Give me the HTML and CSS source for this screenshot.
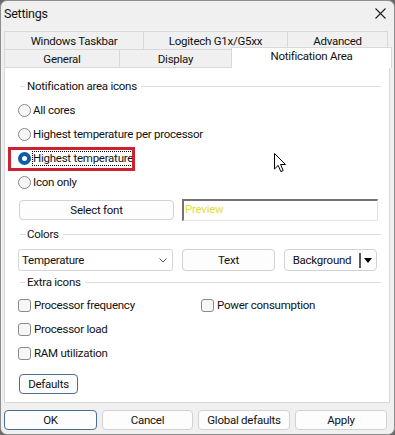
FILE: index.html
```html
<!DOCTYPE html>
<html lang="en">
  <head>
    <meta charset="utf-8" />
    <link rel="stylesheet" href="styles.css">
    <title>Settings</title>
  </head>
  <body>
    <div class="window">
      <div class="titlebar">
        <span class="title">Settings</span>
        <svg class="close" width="11" height="11" viewBox="0 0 11 11">
          <path d="M0.5 0.5 L10.5 10.5 M10.5 0.5 L0.5 10.5" stroke="#1f1f1f" stroke-width="1.1" fill="none" />
        </svg>
      </div>

      <div class="tabs">
        <div class="tabrow top">
          <div class="tab">Windows Taskbar</div>
          <div class="tab">Logitech G1x/G5xx</div>
          <div class="tab">Advanced</div>
        </div>
        <div class="tabrow bottom">
          <div class="tab">General</div>
          <div class="tab">Display</div>
          <div class="tab selected">Notification Area</div>
        </div>
      </div>

      <div class="page">
        <div class="group-title"><span>Notification area icons</span></div>
        <div class="option first"><span class="radio"></span>All cores</div>
        <div class="option"><span class="radio"></span>Highest temperature per processor</div>
        <div class="option marked">
          <span class="radio checked"></span><span class="focus">Highest temperature</span>
          <div class="highlight"></div>
        </div>
        <div class="option"><span class="radio"></span>Icon only</div>

        <div class="font-row">
          <button class="btn font-btn">Select font</button>
          <div class="preview">Preview</div>
        </div>

        <div class="group-title colors"><span>Colors</span></div>
        <div class="color-row">
          <div class="combo">
            <span>Temperature</span>
            <svg width="8" height="5" viewBox="0 0 8 5">
              <path d="M0.5 0.5 L4 4 L7.5 0.5" stroke="#555" fill="none" />
            </svg>
          </div>
          <button class="btn text-btn">Text</button>
          <button class="btn split-btn">
            <span class="split-label">Background</span>
            <span class="split-bar"></span>
            <span class="split-arrow"></span>
          </button>
        </div>

        <div class="group-title extra"><span>Extra icons</span></div>
        <div class="checks">
          <div class="option"><span class="check"></span>Processor frequency</div>
          <div class="option"><span class="check"></span>Power consumption</div>
          <div class="option"><span class="check"></span>Processor load</div>
          <div class="option"></div>
          <div class="option"><span class="check"></span>RAM utilization</div>
        </div>

        <button class="btn default defaults-btn">Defaults</button>

        <svg class="cursor" width="13" height="20" viewBox="0 0 13 20">
          <path d="M0.5 0.5 L0.5 16 L4.2 12.4 L6.8 18.6 L9.2 17.6 L6.6 11.5 L11.5 11.5 Z" fill="#fff" stroke="#000" stroke-width="1" stroke-linejoin="round" />
        </svg>
      </div>

      <div class="buttons">
        <button class="btn default ok">OK</button>
        <button class="btn cancel">Cancel</button>
        <button class="btn global">Global defaults</button>
        <button class="btn apply">Apply</button>
      </div>
    </div>
  </body>
</html>
```

FILE: styles.css
```css
* {
  box-sizing: border-box;
}

body {
  margin: 0;
  background: #6a6a6a;
  font-family: Roboto, "Noto Sans", sans-serif;
  font-size: 11.5px;
  letter-spacing: -0.25px;
  color: #111;
}

.window {
  width: 395px;
  height: 435px;
  background: #f0f0f0;
  border: 1px solid #8f8f8f;
  border-radius: 7px;
  overflow: hidden;
  display: flex;
  flex-direction: column;
}

.titlebar {
  height: 29px;
  display: flex;
  align-items: center;
  justify-content: space-between;
  padding: 0 8px 4px 3px;
  font-size: 12.5px;
}

/* tabs */

.tabs {
  margin-top: 1px;
}

.tabrow {
  display: flex;
  margin-left: 3px;
  height: 18px;
}

.tab {
  height: 18px;
  border: 1px solid #d9d9d9;
  border-bottom: 0;
  margin-left: -1px;
  background: #f0f0f0;
  display: flex;
  align-items: center;
  justify-content: center;
  white-space: nowrap;
}

.tab:first-child {
  margin-left: 0;
}

.top .tab:nth-child(1) { width: 140px; }
.top .tab:nth-child(2) { width: 145px; }
.top .tab:nth-child(3) { width: 101px; }
.bottom .tab:nth-child(1) { width: 116px; }
.bottom .tab:nth-child(2) { width: 113px; }

.tab.selected {
  width: 161px;
  height: 21px;
  margin-top: -2px;
  background: #fff;
  padding-bottom: 4px;
  position: relative;
  z-index: 2;
}

/* page */

.page {
  position: relative;
  margin-left: 3px;
  width: 386px;
  height: 336px;
  background: #fff;
  border: 1px solid #d9d9d9;
  padding: 0 8px 0 13px;
}

.group-title {
  display: flex;
  align-items: center;
  height: 16px;
  margin: 10px 0 0 2px;
}

.group-title::before {
  content: "";
  width: 5px;
  height: 1px;
  background: #dcdcdc;
  margin-right: 2px;
}

.group-title::after {
  content: "";
  flex: 1;
  height: 1px;
  background: #dcdcdc;
  margin-left: 4px;
}

.group-title.colors {
  margin-top: 5px;
}

.group-title.extra {
  margin-top: 3px;
}

.option {
  height: 24px;
  display: flex;
  align-items: center;
  white-space: nowrap;
}

.option.first {
  margin-top: 4px;
}

.option.marked {
  position: relative;
}

.radio {
  width: 13px;
  height: 13px;
  border: 1px solid #8a8a8a;
  border-radius: 50%;
  background: #f6f6f6;
  margin-right: 2px;
  flex: none;
}

.radio.checked {
  border: 4px solid #0a5ea8;
  background: #fff;
}

.focus {
  outline: 1px dotted #000;
  padding: 0 1px 0 0;
  line-height: 13px;
}

.highlight {
  position: absolute;
  left: -10px;
  top: 1px;
  width: 127px;
  height: 24px;
  border: 3px solid #cf2230;
}

.check {
  width: 13px;
  height: 13px;
  border: 1px solid #8a8a8a;
  border-radius: 3px;
  background: #f6f6f6;
  margin-right: 3px;
  flex: none;
}

/* buttons */

.btn {
  font: inherit;
  letter-spacing: inherit;
  color: #111;
  height: 20px;
  padding: 0;
  background: #fdfdfd;
  border: 1px solid #d2d2d2;
  border-radius: 4px;
}

.btn.default {
  border-color: #4a6f93;
}

.font-row {
  display: flex;
  align-items: center;
  height: 22px;
  margin-top: 5px;
}

.font-btn {
  width: 155px;
  margin-left: 1px;
}

.preview {
  width: 196px;
  height: 22px;
  margin-left: 8px;
  border: 1px solid #e2e2e2;
  border-top: 2px solid #737373;
  border-left: 2px solid #737373;
  color: #dede3a;
  line-height: 17px;
  padding-left: 1px;
}

.color-row {
  display: flex;
  align-items: center;
  height: 22px;
  margin-top: 7px;
}

.combo {
  width: 155px;
  height: 22px;
  background: #fff;
  border: 1px solid #d6d6d6;
  border-radius: 3px;
  display: flex;
  align-items: center;
  justify-content: space-between;
  padding: 0 5px 0 3px;
}

.text-btn,
.split-btn {
  width: 93px;
  height: 22px;
  margin-left: 9px;
}

.split-btn {
  display: flex;
  align-items: center;
  padding-right: 4px;
}

.split-label {
  flex: 1;
  text-align: center;
}

.split-bar {
  width: 2px;
  height: 15px;
  background: #5a5a5a;
  margin-right: 3px;
}

.split-arrow {
  width: 0;
  height: 0;
  border-left: 4px solid transparent;
  border-right: 4px solid transparent;
  border-top: 5px solid #000;
}

.checks {
  display: grid;
  grid-template-columns: 183px 1fr;
  margin-top: 3px;
}

.defaults-btn {
  width: 59px;
  margin: 9px 0 0 1px;
}

.cursor {
  position: absolute;
  left: 269px;
  top: 85px;
}

.buttons {
  display: flex;
  gap: 5px;
  margin: 7px 0 0 3px;
}

.ok { width: 93px; }
.cancel { width: 91px; }
.global { width: 92px; }
.apply { width: 92px; }
```
